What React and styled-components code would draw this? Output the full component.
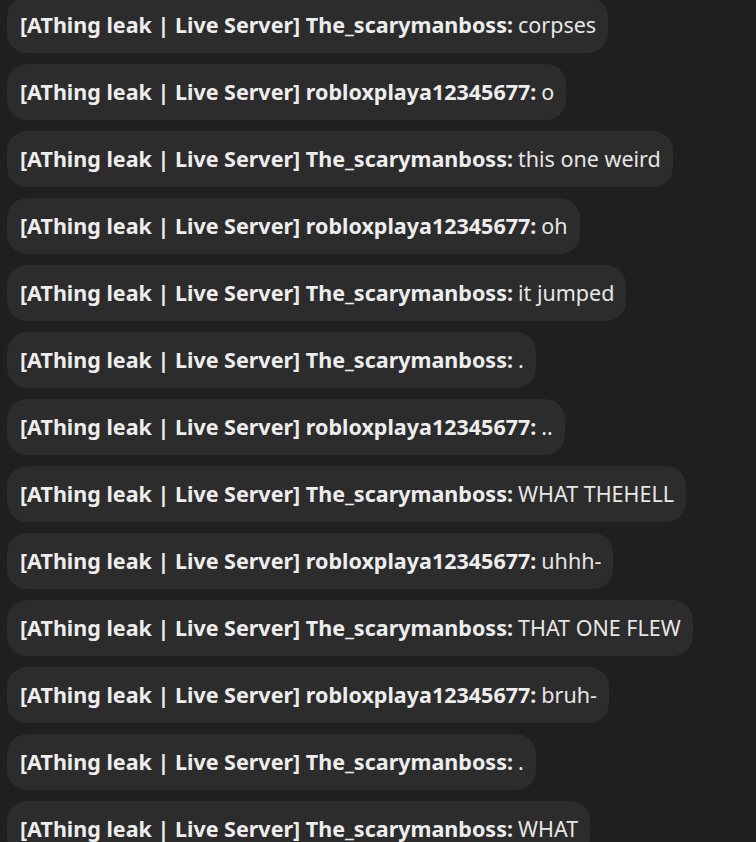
import React from 'react';
import styled, { createGlobalStyle } from 'styled-components';

const GlobalStyle = createGlobalStyle`
  html, body {
    margin: 0;
    padding: 0;
    background: #1f1f1f;
    overflow: hidden;
  }
`;

const Feed = styled.div`
  display: flex;
  flex-direction: column;
  align-items: flex-start;
  gap: 11px;
  padding: 0 7px;
  margin-top: -3px;
  height: 845px;
  overflow: hidden;
  font-family: "Noto Sans", "Open Sans", sans-serif;
`;

const Bubble = styled.div`
  display: flex;
  align-items: center;
  flex: none;
  height: 56px;
  box-sizing: border-box;
  padding: 0 12px 2px 13px;
  background: #2c2c2c;
  border-radius: 20px;
  font-size: 21.5px;
  color: #ededed;
  white-space: nowrap;
`;

const Prefix = styled.span`
  font-weight: 700;
  margin-right: 5px;
`;

const Body = styled.span`
  font-weight: 400;
  color: #e6e6e6;
`;

const messages = [
  ['The_scarymanboss', 'corpses'],
  ['robloxplaya12345677', 'o'],
  ['The_scarymanboss', 'this one weird'],
  ['robloxplaya12345677', 'oh'],
  ['The_scarymanboss', 'it jumped'],
  ['The_scarymanboss', '.'],
  ['robloxplaya12345677', '..'],
  ['The_scarymanboss', 'WHAT THEHELL'],
  ['robloxplaya12345677', 'uhhh-'],
  ['The_scarymanboss', 'THAT ONE FLEW'],
  ['robloxplaya12345677', 'bruh-'],
  ['The_scarymanboss', '.'],
  ['The_scarymanboss', 'WHAT'],
];

export default function App() {
  return (
    <>
      <GlobalStyle />
      <Feed>
        {messages.map(([user, text], idx) => (
          <Bubble key={idx}>
            <Prefix>[AThing leak | Live Server] {user}:</Prefix>
            <Body>{text}</Body>
          </Bubble>
        ))}
      </Feed>
    </>
  );
}
